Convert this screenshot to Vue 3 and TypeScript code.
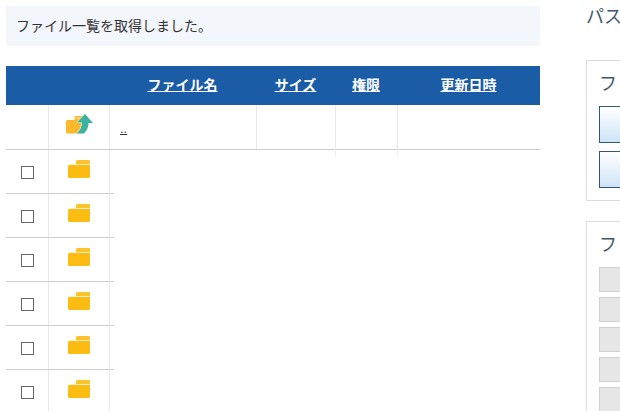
<script setup lang="ts">
const columns = [
  { label: 'ファイル名', cls: 'c-name' },
  { label: 'サイズ', cls: 'c-size' },
  { label: '権限', cls: 'c-perm' },
  { label: '更新日時', cls: 'c-date' },
]
const folders: number[] = [1, 2, 3, 4, 5, 6]
</script>

<template>
  <div class="page">
    <main class="left">
      <p class="notice">ファイル一覧を取得しました。</p>
      <div class="table">
        <div class="thead">
          <span class="c-check"></span>
          <span class="c-icon"></span>
          <a v-for="c in columns" :key="c.label" href="#" :class="['th', c.cls]">{{ c.label }}</a>
        </div>
        <div class="row parent">
          <span class="cell c-check"></span>
          <span class="cell c-icon">
            <svg width="28" height="23" viewBox="0 0 28 23">
              <path d="M1 8.500 Q1 7 2.500 7 H9.500 V4 Q9.500 3 10.500 3 H18 V7 H19 V20.500 H2.500 Q1 20.500 1 19 Z" fill="#fdb92c" />
              <path d="M10.500 6 V4.300 H17 V6 Z" fill="#fcd06a" />
              <path d="M20 1 L28 10 H23.500 Q23.500 16 19 20.500 H11.500 Q17 16 17 9.500 H12 Z" fill="#3bb3a2" stroke="#fff" stroke-width="0.8" paint-order="stroke" />
            </svg>
          </span>
          <span class="cell c-name"><a href="#" class="up">..</a></span>
          <span class="cell c-size stub"></span>
          <span class="cell c-perm stub"></span>
          <span class="cell c-date"></span>
        </div>
        <div v-for="f in folders" :key="f" class="row folder">
          <span class="cell c-check"><input type="checkbox" class="check" /></span>
          <span class="cell c-icon">
            <svg width="24" height="20" viewBox="0 0 24 20">
              <path d="M9 2.500 Q9 1 10.500 1 H22 Q23 1 23 2 V5 H9 Z" fill="#fdc32a" />
              <path d="M1 7.500 Q1 5.800 2.500 5.800 H23 V17.500 Q23 19 21.500 19 H2.500 Q1 19 1 17.500 Z" fill="#fdbc12" />
            </svg>
          </span>
        </div>
      </div>
    </main>
    <aside class="right">
      <h2 class="path">パス</h2>
      <section class="panel ops">
        <h3 class="panel-title">ファイル操作</h3>
        <button class="btn blue"></button>
        <button class="btn blue"><span class="btn-label">ファイル</span></button>
      </section>
      <section class="panel list">
        <h3 class="panel-title">ファイル</h3>
        <button v-for="n in 5" :key="n" class="btn gray"></button>
      </section>
    </aside>
  </div>
</template>

<style scoped>
.page {
  width: 620px;
  height: 411px;
  overflow: hidden;
  display: flex;
  font-family: "Liberation Sans", "Noto Sans CJK JP", sans-serif;
  color: #333;
  background: #fff;
  box-sizing: border-box;
  padding-left: 6px;
}
.left {
  width: 534px;
  flex: none;
  padding-top: 6px;
}
.notice {
  margin: 0 0 20px;
  height: 40px;
  line-height: 40px;
  padding-left: 10px;
  font-size: 14px;
  background: #f3f6fb;
  color: #333;
}
.thead {
  display: flex;
  height: 39px;
  background: #1a5ca6;
  align-items: center;
  padding-bottom: 3px;
  box-sizing: border-box;
}
.thead .c-icon { width: 60px; }
.th {
  color: #fff;
  font-weight: 700;
  font-size: 14px;
  text-align: center;
  text-decoration: underline;
}
.c-check { width: 43px; flex: none; }
.c-icon { width: 61px; flex: none; }
.c-name { width: 147px; flex: none; }
.c-size { width: 79px; flex: none; }
.c-perm { width: 62px; flex: none; }
.c-date { flex: 1; }
.row {
  display: flex;
  box-sizing: border-box;
  border-bottom: 1px solid #ccc;
}
.parent { height: 45px; }
.folder { height: 44px; width: 108px; }
.cell {
  position: relative;
  box-sizing: border-box;
  display: flex;
  align-items: center;
  justify-content: center;
  border-right: 1px solid #e8e8e8;
}
.cell.c-date { border-right: 0; }
.folder .c-icon { width: 61px; border-right: 0; }
.folder .c-icon::after {
  content: "";
  position: absolute;
  left: 60px;
  top: 0;
  bottom: -1px;
  width: 1px;
  background: #e8e8e8;
}
.stub::after {
  content: "";
  position: absolute;
  right: -1px;
  top: 44px;
  height: 8px;
  width: 1px;
  background: #eee;
}
.parent .c-icon svg { margin-top: -5px; margin-left: 0; }
.folder .c-icon svg { margin-top: -6px; margin-left: -1px; }
.c-name.cell { justify-content: flex-start; padding-left: 10px; }
.up {
  color: #333;
  font-size: 13px;
  margin-top: 2px;
}
.check {
  width: 13px;
  height: 13px;
  margin: 0;
  appearance: none;
  box-sizing: border-box;
  border: 1px solid #666;
  background: #fff;
  border-radius: 0;
  margin-top: 1px;
  margin-left: 1px;
}
.right {
  flex: none;
  margin-left: 46px;
  width: 300px;
}
.path {
  margin: 6px 0 0;
  font-size: 18px;
  font-weight: 400;
  line-height: 22px;
  color: #44566a;
}
.panel {
  box-sizing: border-box;
  border: 1px solid #ddd;
  padding: 0 12px;
  background: #fff;
}
.ops { margin-top: 32px; height: 141px; }
.list { margin-top: 20px; height: 300px; }
.panel-title {
  margin: 0;
  padding-top: 12px;
  height: 45px;
  box-sizing: border-box;
  font-size: 18px;
  line-height: 22px;
  font-weight: 400;
  color: #44566a;
}
.btn {
  display: block;
  box-sizing: border-box;
  width: 280px;
  text-align: left;
  padding: 0 0 0 18px;
  font-family: inherit;
}
.blue {
  height: 37px;
  margin-bottom: 8px;
  border: 1px solid #34566f;
  background: linear-gradient(#ffffff, #cfe4f8);
}
.btn-label {
  font-size: 14px;
  color: #333;
}
.gray {
  height: 25px;
  margin-bottom: 5px;
  border: 1px solid #d0d0d0;
  background: #e6e6e6;
}
</style>
